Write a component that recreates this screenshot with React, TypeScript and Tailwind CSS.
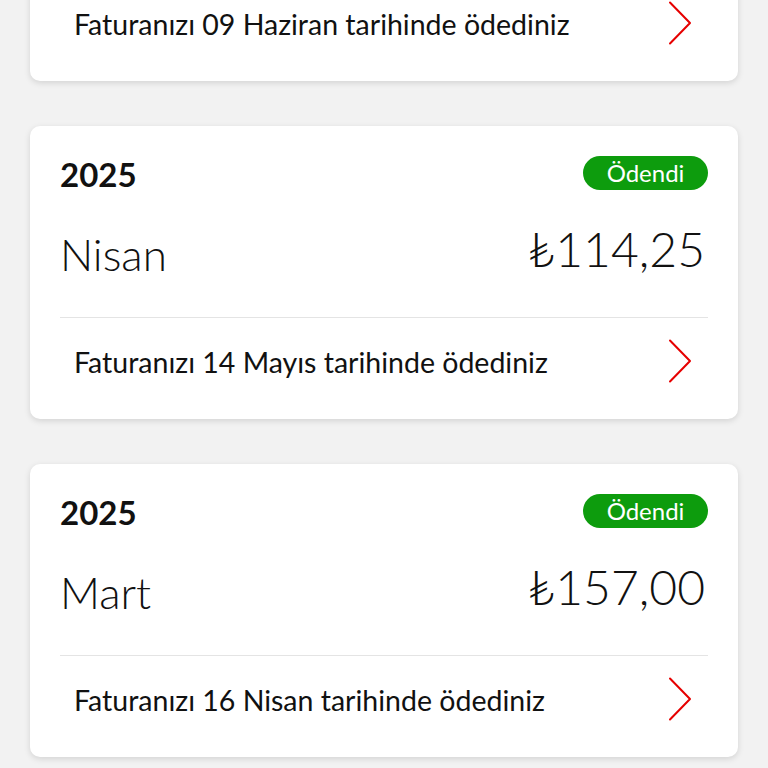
import React from 'react';

type Bill = {
  year: string;
  month: string;
  amount: string;
  paidOn: string;
};

const bills: Bill[] = [
  { year: '2025', month: 'Mayıs', amount: '₺114,25', paidOn: '09 Haziran' },
  { year: '2025', month: 'Nisan', amount: '₺114,25', paidOn: '14 Mayıs' },
  { year: '2025', month: 'Mart', amount: '₺157,00', paidOn: '16 Nisan' },
];

const font = { fontFamily: 'Lato, "Open Sans", sans-serif' };

function Chevron() {
  return (
    <svg width="24" height="44" viewBox="0 0 24 44" fill="none" className="shrink-0">
      <path d="M2 1.5 L22 22 L2 42.5" stroke="#e60000" strokeWidth="2" strokeLinecap="round" strokeLinejoin="round" />
    </svg>
  );
}

function BillCard({ bill }: { bill: Bill }) {
  return (
    <div className="bg-white rounded-[10px] shadow-[0_2px_6px_rgba(0,0,0,0.13)] px-[30px] h-[293px]">
      {/* Header: year + status */}
      <div className="flex items-start justify-between pt-[30px]">
        <span className="mt-[2px] text-[33px] leading-none font-bold text-[#111]">{bill.year}</span>
        <span className="w-[125px] h-[34px] rounded-full bg-[#0d9c0d] text-white text-[24px] leading-none flex items-center justify-center">
          Ödendi
        </span>
      </div>

      {/* Month + amount */}
      <div className="flex items-start justify-between mt-[34px]">
        <span className="mt-[7px] text-[44px] leading-none font-light text-[#111]">{bill.month}</span>
        <span className="text-[48px] leading-none font-light text-[#111] mr-[3px]">{bill.amount}</span>
      </div>

      <div className="mt-[41px] h-px bg-[#e4e4e4]" />

      {/* Footer */}
      <div className="flex items-start justify-between pt-[21px] pl-[14px] pr-[16px]">
        <span className="mt-[9px] text-[28.5px] leading-none text-[#111]">
          Faturanızı {bill.paidOn} tarihinde ödediniz
        </span>
        <Chevron />
      </div>
    </div>
  );
}

export default function App() {
  return (
    <div className="min-h-screen overflow-hidden bg-[#f2f2f2]" style={font}>
      <div className="-mt-[212px] px-[30px] flex flex-col gap-[45px] pb-[40px]">
        {bills.map((bill) => (
          <BillCard key={bill.month} bill={bill} />
        ))}
      </div>
    </div>
  );
}
